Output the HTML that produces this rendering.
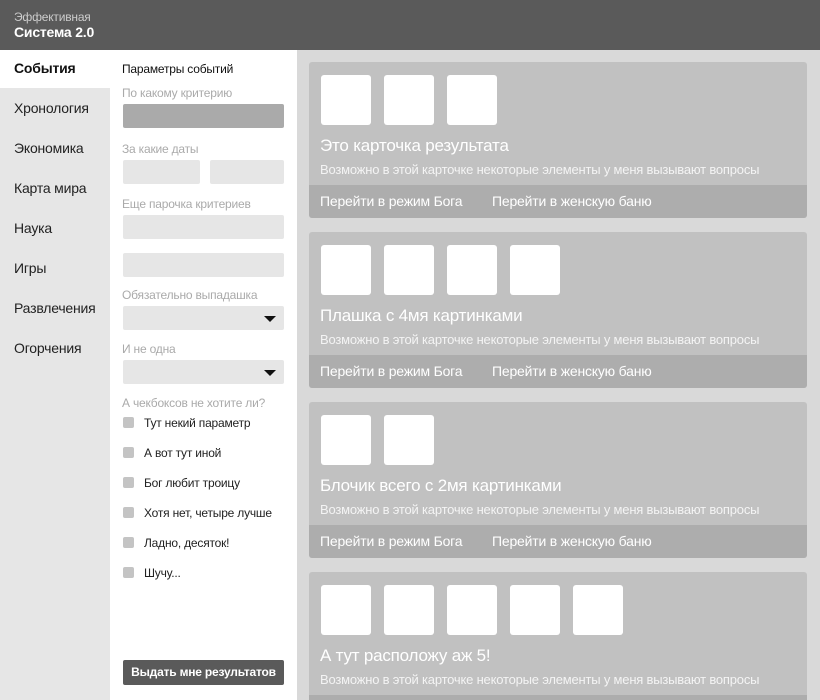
<!DOCTYPE html><html style="width:820px;height:700px;overflow:hidden"><head><meta charset="utf-8"><style>
*{margin:0;padding:0;box-sizing:border-box}
body{width:820px;height:700px;overflow:hidden;font-family:"Liberation Sans","Noto Sans CJK SC",sans-serif;background:#d9d9d9;position:relative;letter-spacing:-0.2px}
.a{position:absolute}
.hdr{left:0;top:0;width:820px;height:50px;background:#5a5a5a}
.nav{left:0;top:50px;width:110px;height:650px;background:#e6e6e6}
.sel{left:0;top:50px;width:110px;height:38px;background:#fff}
.pan{left:110px;top:50px;width:187px;height:650px;background:#fff}
.lbl{font-size:12px;color:#aaa;left:122px}
.inp{background:#e6e6e6;border-radius:2px;height:24px}
.tri{position:absolute;right:8px;top:10px;border-left:6px solid transparent;border-right:6px solid transparent;border-top:6px solid #111}
.cb{left:123px;width:11px;height:11px;background:#c4c4c4;border-radius:2px}
.ct{left:144px;font-size:12px;color:#222}
.card{left:309px;width:498px;height:156px;background:#c1c1c1;border-radius:3px;overflow:hidden}
.im{position:absolute;top:13px;width:50px;height:50px;background:#fff;border-radius:3px}
.t{position:absolute;left:11px;top:74px;font-size:17px;color:#fff}
.s{position:absolute;left:11px;top:100px;font-size:13px;color:#f4f4f4}
.f{position:absolute;left:0;top:123px;width:100%;height:33px;background:#adadad;color:#fff;font-size:14px}
.f span{position:absolute;top:8px}
</style></head><body>
<div class="a hdr"></div>
<div class="a" style="left:14px;top:10px;font-size:12px;color:#ccc">Эффективная</div>
<div class="a" style="left:14px;top:24px;font-size:14px;color:#fff;font-weight:bold">Система 2.0</div>
<div class="a nav"></div><div class="a sel"></div>
<div class="a" style="left:14px;top:60px;font-size:14px;font-weight:bold;color:#111">События</div>
<div class="a" style="left:14px;top:100px;font-size:14px;color:#222">Хронология</div>
<div class="a" style="left:14px;top:140px;font-size:14px;color:#222">Экономика</div>
<div class="a" style="left:14px;top:180px;font-size:14px;color:#222">Карта мира</div>
<div class="a" style="left:14px;top:220px;font-size:14px;color:#222">Наука</div>
<div class="a" style="left:14px;top:260px;font-size:14px;color:#222">Игры</div>
<div class="a" style="left:14px;top:300px;font-size:14px;color:#222">Развлечения</div>
<div class="a" style="left:14px;top:340px;font-size:14px;color:#222">Огорчения</div>
<div class="a pan"></div>
<div class="a" style="left:122px;top:62px;font-size:12px;color:#111">Параметры событий</div>
<div class="a lbl" style="top:86px">По какому критерию</div>
<div class="a inp" style="left:123px;top:104px;width:161px;background:#aaa"></div>
<div class="a lbl" style="top:142px">За какие даты</div>
<div class="a inp" style="left:123px;top:160px;width:77px"></div>
<div class="a inp" style="left:210px;top:160px;width:74px"></div>
<div class="a lbl" style="top:197px">Еще парочка критериев</div>
<div class="a inp" style="left:123px;top:215px;width:161px"></div>
<div class="a inp" style="left:123px;top:253px;width:161px"></div>
<div class="a lbl" style="top:288px">Обязательно выпадашка</div>
<div class="a inp" style="left:123px;top:306px;width:161px"><div class="tri"></div></div>
<div class="a lbl" style="top:342px">И не одна</div>
<div class="a inp" style="left:123px;top:360px;width:161px"><div class="tri"></div></div>
<div class="a lbl" style="top:396px">А чекбоксов не хотите ли?</div>
<div class="a cb" style="top:417px"></div><div class="a ct" style="top:416px">Тут некий параметр</div>
<div class="a cb" style="top:447px"></div><div class="a ct" style="top:446px">А вот тут иной</div>
<div class="a cb" style="top:477px"></div><div class="a ct" style="top:476px">Бог любит троицу</div>
<div class="a cb" style="top:507px"></div><div class="a ct" style="top:506px">Хотя нет, четыре лучше</div>
<div class="a cb" style="top:537px"></div><div class="a ct" style="top:536px">Ладно, десяток!</div>
<div class="a cb" style="top:567px"></div><div class="a ct" style="top:566px">Шучу...</div>
<div class="a" style="left:123px;top:660px;width:161px;height:25px;background:#5a5a5a;border-radius:2px;color:#fff;font-size:12px;font-weight:bold;text-align:center;line-height:25px">Выдать мне результатов</div>

<div class="a card" style="top:62px"><div class="im" style="left:12px"></div><div class="im" style="left:75px"></div><div class="im" style="left:138px"></div>
<div class="t">Это карточка результата</div><div class="s">Возможно в этой карточке некоторые элементы у меня вызывают вопросы</div>
<div class="f"><span style="left:11px">Перейти в режим Бога</span><span style="left:183px">Перейти в женскую баню</span></div></div>
<div class="a card" style="top:232px"><div class="im" style="left:12px"></div><div class="im" style="left:75px"></div><div class="im" style="left:138px"></div><div class="im" style="left:201px"></div>
<div class="t">Плашка с 4мя картинками</div><div class="s">Возможно в этой карточке некоторые элементы у меня вызывают вопросы</div>
<div class="f"><span style="left:11px">Перейти в режим Бога</span><span style="left:183px">Перейти в женскую баню</span></div></div>
<div class="a card" style="top:402px"><div class="im" style="left:12px"></div><div class="im" style="left:75px"></div>
<div class="t">Блочик всего с 2мя картинками</div><div class="s">Возможно в этой карточке некоторые элементы у меня вызывают вопросы</div>
<div class="f"><span style="left:11px">Перейти в режим Бога</span><span style="left:183px">Перейти в женскую баню</span></div></div>
<div class="a card" style="top:572px;height:128px;border-radius:3px 3px 0 0"><div class="im" style="left:12px"></div><div class="im" style="left:75px"></div><div class="im" style="left:138px"></div><div class="im" style="left:201px"></div><div class="im" style="left:264px"></div>
<div class="t">А тут расположу аж 5!</div><div class="s">Возможно в этой карточке некоторые элементы у меня вызывают вопросы</div>
<div class="f"><span style="left:11px">Перейти в режим Бога</span><span style="left:183px">Перейти в женскую баню</span></div></div>
</body></html>
